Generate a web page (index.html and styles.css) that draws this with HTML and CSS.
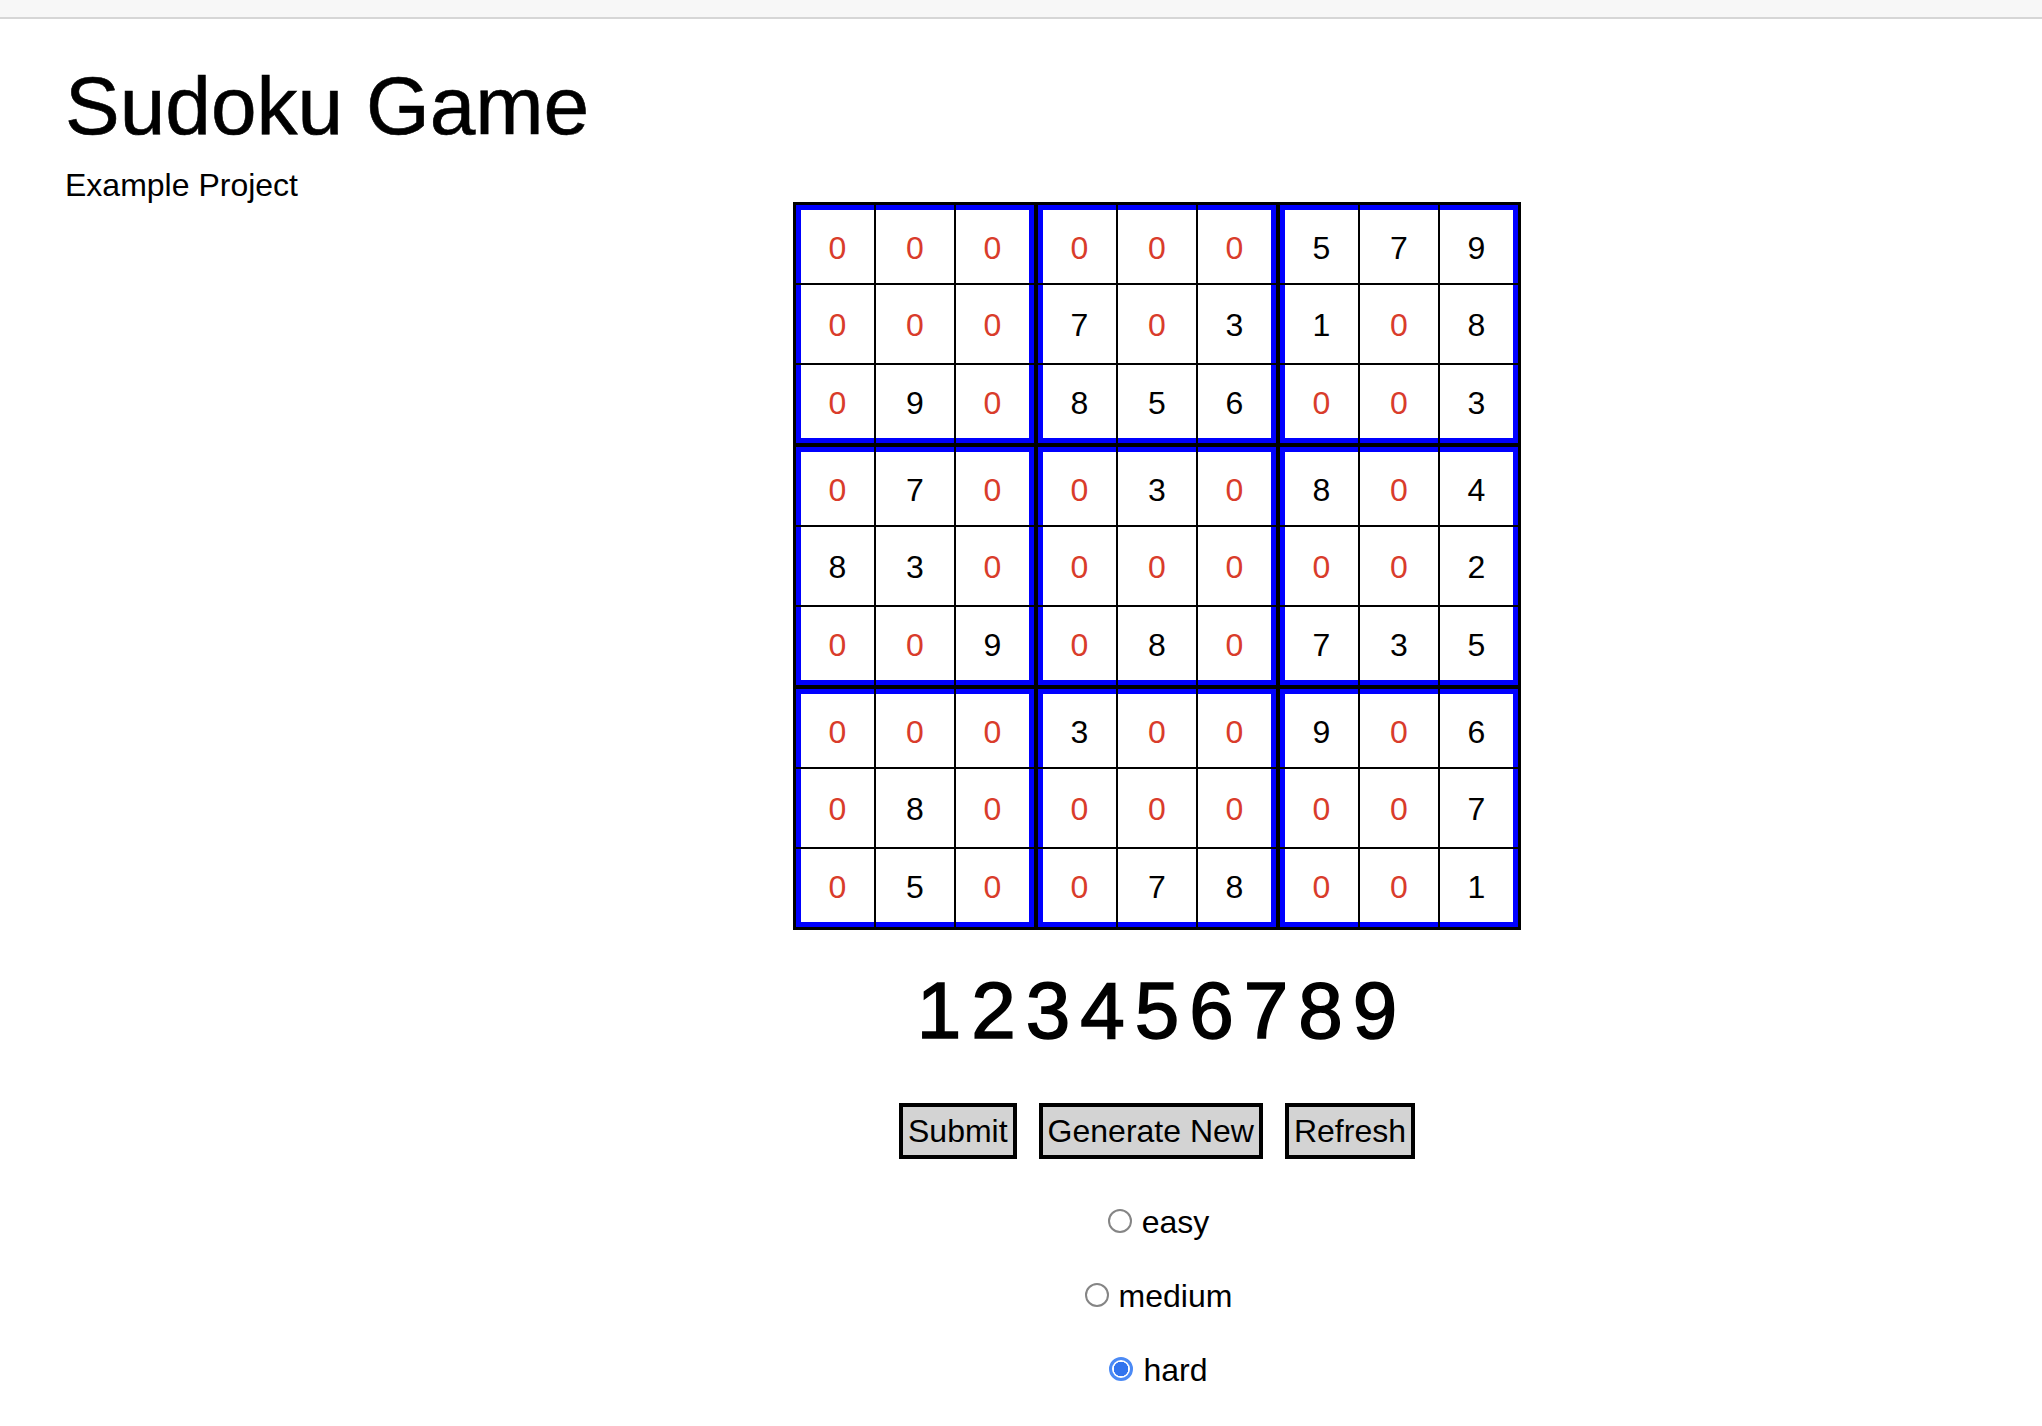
FILE: index.html
```html
<!DOCTYPE html>
<html lang="en">
<head>
<meta charset="utf-8">
<title>Sudoku Game</title>
<link rel="stylesheet" href="styles.css">
</head>
<body>
<div class="topbar"></div>
<header class="header">
  <h1 class="title">Sudoku Game</h1>
  <p class="subtitle">Example Project</p>
</header>
<main class="main">
  <div class="board">
    <div class="cell z">0</div><div class="cell z">0</div><div class="cell z">0</div><div class="cell z">0</div><div class="cell z">0</div><div class="cell z">0</div><div class="cell">5</div><div class="cell">7</div><div class="cell">9</div>
    <div class="cell z">0</div><div class="cell z">0</div><div class="cell z">0</div><div class="cell">7</div><div class="cell z">0</div><div class="cell">3</div><div class="cell">1</div><div class="cell z">0</div><div class="cell">8</div>
    <div class="cell z">0</div><div class="cell">9</div><div class="cell z">0</div><div class="cell">8</div><div class="cell">5</div><div class="cell">6</div><div class="cell z">0</div><div class="cell z">0</div><div class="cell">3</div>
    <div class="cell z">0</div><div class="cell">7</div><div class="cell z">0</div><div class="cell z">0</div><div class="cell">3</div><div class="cell z">0</div><div class="cell">8</div><div class="cell z">0</div><div class="cell">4</div>
    <div class="cell">8</div><div class="cell">3</div><div class="cell z">0</div><div class="cell z">0</div><div class="cell z">0</div><div class="cell z">0</div><div class="cell z">0</div><div class="cell z">0</div><div class="cell">2</div>
    <div class="cell z">0</div><div class="cell z">0</div><div class="cell">9</div><div class="cell z">0</div><div class="cell">8</div><div class="cell z">0</div><div class="cell">7</div><div class="cell">3</div><div class="cell">5</div>
    <div class="cell z">0</div><div class="cell z">0</div><div class="cell z">0</div><div class="cell">3</div><div class="cell z">0</div><div class="cell z">0</div><div class="cell">9</div><div class="cell z">0</div><div class="cell">6</div>
    <div class="cell z">0</div><div class="cell">8</div><div class="cell z">0</div><div class="cell z">0</div><div class="cell z">0</div><div class="cell z">0</div><div class="cell z">0</div><div class="cell z">0</div><div class="cell">7</div>
    <div class="cell z">0</div><div class="cell">5</div><div class="cell z">0</div><div class="cell z">0</div><div class="cell">7</div><div class="cell">8</div><div class="cell z">0</div><div class="cell z">0</div><div class="cell">1</div>
  </div>
  <div class="numbers">
    <span class="num">1</span><span class="num">2</span><span class="num">3</span><span class="num">4</span><span class="num">5</span><span class="num">6</span><span class="num">7</span><span class="num">8</span><span class="num">9</span>
  </div>
  <div class="actions">
    <button class="btn" type="button">Submit</button>
    <button class="btn" type="button">Generate New</button>
    <button class="btn" type="button">Refresh</button>
  </div>
  <div class="levels">
    <label class="level"><input class="radio" type="radio" name="level" value="easy"><span>easy</span></label>
    <label class="level"><input class="radio" type="radio" name="level" value="medium"><span>medium</span></label>
    <label class="level"><input class="radio" type="radio" name="level" value="hard" checked><span>hard</span></label>
  </div>
</main>
</body>
</html>
```

FILE: styles.css
```css
html, body {
  margin: 0;
  padding: 0;
  background: #ffffff;
  color: #000000;
  font-family: "Liberation Sans", Arial, Helvetica, sans-serif;
}

.topbar {
  height: 17px;
  background: #f7f7f7;
  border-bottom: 2px solid #d6d6d6;
}

.header {
  padding-left: 65px;
}

.title {
  margin: 40px 0 0 0;
  font-size: 82px;
  font-weight: 400;
  line-height: 93px;
  -webkit-text-stroke: 0.6px #000000;
}

.subtitle {
  margin: 15px 0 0 0;
  font-size: 32px;
  line-height: 37px;
}

.main {
  padding-left: 272px;
  display: flex;
  flex-direction: column;
  align-items: center;
  padding-bottom: 40px;
}

.board {
  margin-top: -2px;
  display: grid;
  grid-template-columns: 78px 78px 80px 78px 78px 80px 78px 78px 78px;
  grid-template-rows: 78px 78px 80px 78px 78px 80px 78px 78px 78px;
  gap: 2px;
  background: #000000;
  border: 3px solid #000000;
}

.cell {
  box-sizing: border-box;
  width: 78px;
  height: 78px;
  padding-top: 3px;
  background: #ffffff;
  display: flex;
  align-items: center;
  justify-content: center;
  font-size: 32px;
  color: #000000;
}

.cell.z {
  color: #d93c2b;
}

/* box edges */
.cell:nth-child(3n+1) { border-left: 5px solid #0000ff; }
.cell:nth-child(3n) { border-right: 5px solid #0000ff; }
.cell:nth-child(-n+9),
.cell:nth-child(n+28):nth-child(-n+36),
.cell:nth-child(n+55):nth-child(-n+63) { border-top: 5px solid #0000ff; }
.cell:nth-child(n+19):nth-child(-n+27),
.cell:nth-child(n+46):nth-child(-n+54),
.cell:nth-child(n+73) { border-bottom: 5px solid #0000ff; }

/* separators between boxes */
.cell:nth-child(9n+3),
.cell:nth-child(9n+6) { margin-right: 2px; }
.cell:nth-child(n+19):nth-child(-n+27),
.cell:nth-child(n+46):nth-child(-n+54) { margin-bottom: 2px; }

.numbers {
  margin-top: 35px;
  display: flex;
  gap: 10px;
  font-size: 80px;
  font-weight: 400;
  line-height: 92px;
  -webkit-text-stroke: 1.6px #000000;
}

.actions {
  margin-top: 46px;
  display: flex;
  gap: 22px;
}

.btn {
  box-sizing: border-box;
  height: 56px;
  padding: 0 5px;
  border: 4px solid #000000;
  border-radius: 0;
  background: #d3d3d3;
  color: #000000;
  font-family: "Liberation Sans", Arial, Helvetica, sans-serif;
  font-size: 32px;
  line-height: 37px;
}

.levels {
  margin-top: 45px;
  display: flex;
  flex-direction: column;
  align-items: center;
  gap: 37px;
}

.level {
  display: flex;
  align-items: center;
  gap: 10px;
  font-size: 32px;
  line-height: 37px;
  padding-left: 3px;
}

.radio {
  appearance: none;
  -webkit-appearance: none;
  box-sizing: border-box;
  width: 24px;
  height: 24px;
  margin: -4px 0 0 0;
  border: 2px solid #858585;
  border-radius: 50%;
  background: #ffffff;
}

.radio:checked {
  border: 3px solid #4b8af5;
  background: radial-gradient(circle, #3274ee 0 7px, #ffffff 7.5px);
}
```
